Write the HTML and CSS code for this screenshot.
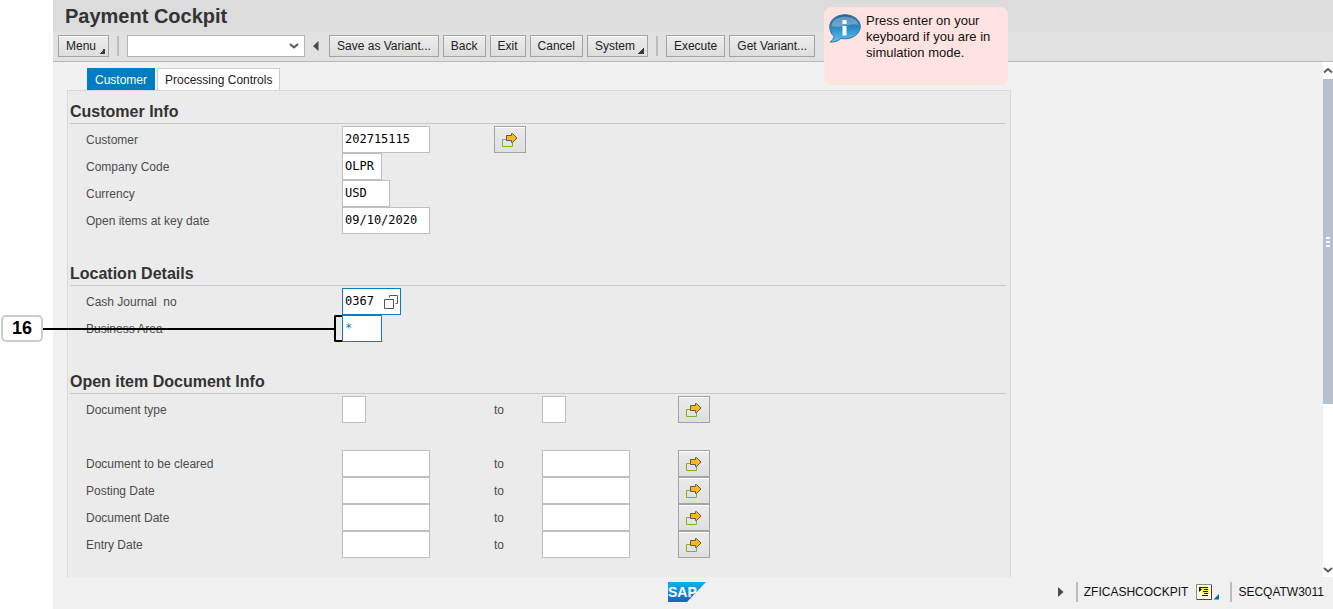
FILE: index.html
```html
<!DOCTYPE html>
<html lang="en">
<head>
<meta charset="utf-8">
<title>Payment Cockpit</title>
<link rel="stylesheet" href="styles.css">
</head>
<body>
<svg class="defs" aria-hidden="true">
  <symbol id="multi" viewBox="0 0 16 16">
    <path d="M.500 7.500h10v7H.500z" fill="none" stroke="#7ab51d"/>
    <path d="M4.500 3.500h5V1.500h1L15 6l-4.500 4.500h-1V8.500h-5z" fill="#fdb913" stroke="#5a5a5a"/>
  </symbol>
</svg>
<div class="app">
  <header class="titlebar"><h1>Payment Cockpit</h1></header>
  <nav class="toolbar" aria-label="Actions">
    <button class="btn btn-menu" type="button">Menu</button>
    <span class="sep"></span>
    <span class="command">
      <select aria-label="Command"><option></option></select>
      <svg class="chevron" viewBox="0 0 10 6"><path d="M1 1l4 3.500L9 1" fill="none" stroke="#555" stroke-width="2"/></svg>
    </span>
    <button class="collapse" type="button" aria-label="Hide command field"><svg viewBox="0 0 6 10"><path d="M5.500 0v10L0 5z" fill="#4a4a4a"/></svg></button>
    <button class="btn" type="button">Save as Variant...</button>
    <button class="btn" type="button">Back</button>
    <button class="btn" type="button">Exit</button>
    <button class="btn" type="button">Cancel</button>
    <button class="btn btn-menu" type="button">System</button>
    <span class="sep"></span>
    <button class="btn" type="button">Execute</button>
    <button class="btn" type="button">Get Variant...</button>
  </nav>

  <div class="body">
    <main class="content">
      <div class="tabs" role="tablist">
        <button class="tab tab-active" type="button" role="tab" aria-selected="true">Customer</button>
        <button class="tab" type="button" role="tab" aria-selected="false">Processing Controls</button>
      </div>
      <form class="panel">
        <section class="group">
          <h2>Customer Info</h2>
          <div class="row"><label for="customer">Customer</label><input id="customer" class="w-long" value="202715115"><button class="more" type="button" aria-label="Multiple selection, customer"><svg><use href="#multi"/></svg></button></div>
          <div class="row"><label for="company">Company Code</label><input id="company" class="w-code" value="OLPR"></div>
          <div class="row"><label for="currency">Currency</label><input id="currency" class="w-cur" value="USD"></div>
          <div class="row"><label for="keydate">Open items at key date</label><input id="keydate" class="w-long" value="09/10/2020"></div>
        </section>
        <section class="group">
          <h2>Location Details</h2>
          <div class="row"><label for="journal">Cash Journal&nbsp; no</label>
            <span class="lookup"><input id="journal" value="0367"><button type="button" aria-label="Search help"><svg viewBox="0 0 16 16"><path d="M.500 5.500h9v9h-9zM5.500 3.500v-2h8v8h-2" fill="none" stroke="#555"/></svg></button></span></div>
          <div class="row"><label for="area">Business Area</label><input id="area" class="w-code focus" value="*"></div>
        </section>
        <section class="group">
          <h2>Open item Document Info</h2>
          <div class="row row-gap"><label for="dtype">Document type</label><input id="dtype" class="w-short"><label for="dtype2">to</label><input id="dtype2" class="w-short"><button class="more" type="button" aria-label="Multiple selection, document type"><svg><use href="#multi"/></svg></button></div>
          <div class="row"><label for="clear">Document to be cleared</label><input id="clear" class="w-long"><label for="clear2">to</label><input id="clear2" class="w-long"><button class="more" type="button" aria-label="Multiple selection, document to be cleared"><svg><use href="#multi"/></svg></button></div>
          <div class="row"><label for="post">Posting Date</label><input id="post" class="w-long"><label for="post2">to</label><input id="post2" class="w-long"><button class="more" type="button" aria-label="Multiple selection, posting date"><svg><use href="#multi"/></svg></button></div>
          <div class="row"><label for="ddate">Document Date</label><input id="ddate" class="w-long"><label for="ddate2">to</label><input id="ddate2" class="w-long"><button class="more" type="button" aria-label="Multiple selection, document date"><svg><use href="#multi"/></svg></button></div>
          <div class="row"><label for="entry">Entry Date</label><input id="entry" class="w-long"><label for="entry2">to</label><input id="entry2" class="w-long"><button class="more" type="button" aria-label="Multiple selection, entry date"><svg><use href="#multi"/></svg></button></div>
        </section>
      </form>
    </main>
    <div class="scroll" aria-hidden="true">
      <svg viewBox="0 0 10 17"><path d="M1 10.500L5 7l4 3.500" fill="none" stroke="#5a5a5a" stroke-width="2"/></svg>
      <div class="thumb"><i></i><i></i><i></i></div>
      <div class="track"></div>
      <svg viewBox="0 0 10 17"><path d="M1 8l4 3.500L9 8" fill="none" stroke="#5a5a5a" stroke-width="2"/></svg>
    </div>
  </div>

  <footer class="status">
    <span class="status-side"></span>
    <svg class="logo" viewBox="0 0 38 20" role="img" aria-label="SAP">
      <defs><linearGradient id="sapfill" x1="0" y1="0" x2="0" y2="1"><stop offset="0" stop-color="#00b5ee"/><stop offset="1" stop-color="#1d62be"/></linearGradient></defs>
      <path d="M0 0h38L19 20H0z" fill="url(#sapfill)"/>
      <text class="logo-text" x="0" y="15">SAP</text>
    </svg>
    <div class="status-side status-info">
      <button class="collapse" type="button" aria-label="Collapse status"><svg viewBox="0 0 6 10"><path d="M0 0v10l5.500-5z" fill="#4a4a4a"/></svg></button>
      <span class="sep"></span>
      <span>ZFICASHCOCKPIT</span>
      <button class="session" type="button" aria-label="Session details"><svg viewBox="0 0 24 16">
        <path d="M.500.500h15v15H.500z" fill="#fffde0" stroke="#888"/><path d="M15.500 1v14.500H1" fill="none" stroke="#444"/>
        <path d="M6 4h7v6H6z" fill="#ffef4a"/>
        <path d="M3 3v5l3-2.500z" fill="#111"/>
        <path d="M3 3.500h9M8 5.500h4M7 7.500h5M8 9.500h4M6 11.500h6" fill="none" stroke="#222"/>
        <path d="M23 10v5.500h-5.500z" fill="#0070a8"/></svg></button>
      <span class="sep"></span>
      <span>SECQATW3011</span>
    </div>
  </footer>

  <aside class="notice">
    <svg viewBox="0 0 32 29" aria-hidden="true">
      <defs><linearGradient id="bubble" x1="0" y1="0" x2="0" y2="1"><stop offset="0" stop-color="#1d5f93"/><stop offset=".5" stop-color="#2d8cc6"/><stop offset="1" stop-color="#58c4f8"/></linearGradient></defs>
      <path d="M16 .700C24.500.700 31.300 6 31.300 12.600S24.500 24.800 16 24.800c-1.400 0-2.700-.1-4-.400C9.500 27 5.500 28.500 1 28c2-1.200 3.600-3.100 4-5.600C2.200 20 .700 16.500.700 12.600.700 6 7.500.700 16 .700z" fill="url(#bubble)" stroke="#3f6f96"/>
      <path d="M2.500 12C3 6 9 2.500 16 2.500S29 6 29.500 11c-8-3-18 4-27 1z" fill="#fff" opacity=".3"/>
      <path d="M13.500 6h4v4h-4zM13.500 12h4v9.500h-4z" fill="#fff"/>
    </svg>
    <p>Press enter on your keyboard if you are in simulation mode.</p>
  </aside>
</div>
<div class="callout"><span class="callout-no">16</span><span class="callout-line"></span><span class="callout-bracket"></span></div>
</body>
</html>
```
FILE: styles.css
```css
* { box-sizing: border-box; }
body {
  margin: 0;
  background: #fff;
  color: #222;
  font: 12px/16px "Liberation Sans", Arial, sans-serif;
}
button, input, select { font: inherit; color: inherit; margin: 0; border-radius: 0; }
button { padding: 0; border: 0; background: none; white-space: nowrap; }
svg { display: block; }
h1, h2, p { margin: 0; }
.defs { position: absolute; width: 0; height: 0; }

.app {
  position: relative;
  display: flex;
  flex-direction: column;
  min-height: 100vh;
  margin-left: 53px;
  background: #f1f1f1;
}
.titlebar { height: 32px; padding: 4px 12px; background: #dcdcdc; }
.titlebar h1 { font-size: 20px; line-height: 24px; color: #333; }

.toolbar {
  display: flex;
  align-items: center;
  gap: 4px;
  height: 30px;
  padding: 0 5px 2px;
  background: #e1e1e1;
  border-bottom: 1px solid #b8b8b8;
}
.btn {
  height: 22px;
  padding: 0 7px;
  border: 1px solid #a3a3a3;
  background: linear-gradient(#ececec, #dedede);
  box-shadow: inset 0 1px #fff;
}
.btn-menu { position: relative; padding-right: 12px; }
.btn-menu::after {
  content: "";
  position: absolute;
  right: 3px;
  bottom: 2px;
  width: 6px;
  height: 6px;
  background: linear-gradient(135deg, transparent 50%, #3a3a3a 50%);
}
.sep { flex: none; width: 2px; height: 20px; margin: 0 4px; background: #bdbdbd; }
.command { position: relative; width: 178px; }
.command select {
  display: block;
  width: 100%;
  height: 22px;
  padding: 0 20px 0 6px;
  border: 1px solid #b5b5b5;
  background: #fff;
  appearance: none;
}
.chevron { position: absolute; right: 6px; top: 8px; width: 10px; height: 6px; pointer-events: none; }
.collapse { width: 16px; padding: 0 5px 0 4px; }
.collapse svg { width: 6px; height: 10px; }

.body { flex: 1; display: flex; }
.content { flex: 1; display: flex; flex-direction: column; padding: 6px 14px 0; }
.tabs { display: flex; gap: 2px; padding-left: 20px; }
.tab { height: 22px; padding: 0 7px; border: 1px solid #ccc; border-bottom: 0; background: #fff; }
.tab-active { border-color: #007cc0; background: #007cc0; color: #fff; }
.panel {
  flex: 1;
  max-width: 944px;
  padding: 8px 4px 18px 2px;
  border: 1px solid #d9d9d9;
  border-bottom: 0;
  background: #ebebeb;
}
.group + .group { margin-top: 27px; }
.group h2 {
  height: 25px;
  margin-bottom: 2px;
  border-bottom: 1px solid #c9c9c9;
  font-size: 16px;
  line-height: 26px;
  color: #333;
}
.row {
  display: grid;
  grid-template-columns: 256px 152px 48px 136px 32px;
  align-items: center;
  height: 27px;
  padding-left: 16px;
}
.row-gap { margin-bottom: 27px; }
.row label { color: #4c4c4c; }
.row input {
  height: 27px;
  padding: 0 2px 2px;
  border: 1px solid #bfbfbf;
  background: #fff;
  color: #000;
  font-family: "DejaVu Sans Mono", monospace;
}
.row .w-long { width: 88px; }
.row .w-cur { width: 48px; }
.row .w-code { width: 40px; }
.row .w-short { width: 24px; }
.row .focus { border-color: #0a7fc0; color: #0a7fc0; }
.lookup { display: flex; align-items: center; width: 59px; border: 1px solid #0a7fc0; background: #fff; }
.row .lookup input { width: 41px; height: 25px; border: 0; }
.lookup svg { width: 16px; height: 16px; }
.more {
  display: flex;
  align-items: center;
  justify-content: center;
  width: 32px;
  height: 27px;
  border: 1px solid #a3a3a3;
  background: linear-gradient(#ebebeb, #dfdfdf);
  box-shadow: inset 0 1px #fff;
}
.more svg { width: 16px; height: 16px; }

.scroll { display: flex; flex-direction: column; width: 10px; background: #fff; }
.scroll svg { width: 10px; height: 17px; }
.thumb {
  flex: 325;
  display: flex;
  flex-direction: column;
  align-items: center;
  justify-content: center;
  gap: 2px;
  background: #b5c0cc;
}
.thumb i { width: 4px; height: 2px; background: #fff; }
.track { flex: 156; }

.status {
  display: flex;
  align-items: center;
  height: 32px;
  padding: 0 9px 2px 0;
  background: #f0f0f0;
  color: #111;
}
.status-side { flex: 1; }
.status-info { display: flex; align-items: center; justify-content: flex-end; gap: 3px; }
.status .sep { margin: 0 3px; }
.logo { width: 38px; height: 20px; margin-right: 4px; }
.logo-text { fill: #fff; font: bold 14px "Liberation Sans", Arial, sans-serif; }
.session { margin: 0 4px 0 5px; }
.session svg { width: 24px; height: 16px; }

.notice {
  position: absolute;
  left: 771px;
  top: 7px;
  display: flex;
  gap: 5px;
  width: 184px;
  height: 78px;
  padding: 6px 5px;
  border-radius: 8px;
  background: #ffe3e0;
  color: #111;
  font-size: 13px;
}
.notice svg { flex: none; width: 32px; height: 29px; margin-top: 1px; }

.callout { position: absolute; left: 1px; top: 315px; display: flex; align-items: center; width: 341px; height: 27px; pointer-events: none; }
.callout-no {
  width: 42px;
  height: 27px;
  border: 2px solid #ccc;
  border-radius: 5px;
  background: #fff;
  color: #000;
  font-size: 18px;
  font-weight: bold;
  line-height: 23px;
  text-align: center;
}
.callout-line { flex: 1; height: 2px; background: #000; }
.callout-bracket { width: 8px; height: 27px; border: 2px solid #000; border-right: 0; border-radius: 2px 0 0 2px; }
```
